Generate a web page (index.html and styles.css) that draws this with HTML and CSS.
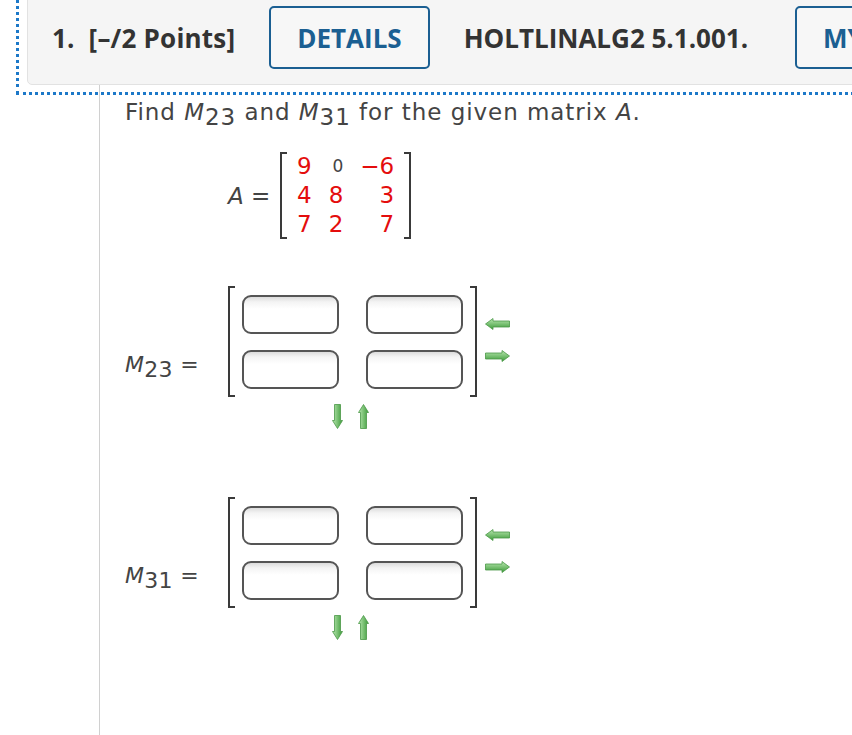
FILE: index.html
```html
<!DOCTYPE html>
<html>
<head>
<meta charset="utf-8">
<link rel="stylesheet" href="styles.css">
</head>
<body>
<div class="question">
  <div class="qwrap">
    <div class="qhead">
      <span class="qnum">1.&nbsp; [–/2 Points]</span>
      <button class="btn btn-details">DETAILS</button>
      <span class="qid">HOLTLINALG2 5.1.001.</span>
      <button class="btn btn-notes">MY NOTES</button>
    </div>
  </div>
  <div class="qbody">
    <p class="prompt">Find <i>M</i><sub>23</sub> and <i>M</i><sub>31</sub> for the given matrix <i>A</i>.</p>

    <div class="given">
      <span class="glabel"><i>A</i> =</span>
      <div class="mat">
        <span class="br br-l"></span>
        <div class="nums">
          <span class="red">9</span><span class="zero">0</span><span class="red">−6</span>
          <span class="red">4</span><span class="red">8</span><span class="red">3</span>
          <span class="red">7</span><span class="red">2</span><span class="red">7</span>
        </div>
        <span class="br br-r"></span>
      </div>
    </div>

    <div class="answer">
      <div class="alabel"><i>M</i><sub>23</sub> =</div>
      <div class="acol">
        <div class="arow">
          <div class="mat">
            <span class="br br-l"></span>
            <div class="cells">
              <input class="cell" type="text">
              <input class="cell" type="text">
              <input class="cell" type="text">
              <input class="cell" type="text">
            </div>
            <span class="br br-r"></span>
          </div>
          <div class="lr">
            <svg class="harrow" width="25" height="12" viewBox="0 0 25 12"><defs><linearGradient id="gh1" x1="0" y1="0" x2="0" y2="1"><stop offset="0" stop-color="#b9e8b0"/><stop offset="1" stop-color="#3c9a39"/></linearGradient></defs><path d="M0.5 6 L8 0.5 V3 H24.5 V9 H8 V11.5 Z" fill="url(#gh1)" stroke="#4a9846" stroke-width="0.8"/></svg>
            <svg class="harrow" width="25" height="12" viewBox="0 0 25 12"><defs><linearGradient id="gh2" x1="0" y1="0" x2="0" y2="1"><stop offset="0" stop-color="#b9e8b0"/><stop offset="1" stop-color="#3c9a39"/></linearGradient></defs><path d="M24.5 6 L17 0.5 V3 H0.5 V9 H17 V11.5 Z" fill="url(#gh2)" stroke="#4a9846" stroke-width="0.8"/></svg>
          </div>
        </div>
        <div class="ud">
          <svg width="11" height="25" viewBox="0 0 11 25"><defs><linearGradient id="gv1" x1="0" y1="0" x2="1" y2="0"><stop offset="0" stop-color="#b9e8b0"/><stop offset="1" stop-color="#3c9a39"/></linearGradient></defs><path d="M2.5 0.5 H8.5 V16.5 H10.5 L5.5 24.5 L0.5 16.5 H2.5 Z" fill="url(#gv1)" stroke="#4a9846" stroke-width="0.8"/></svg>
          <svg width="11" height="25" viewBox="0 0 11 25"><defs><linearGradient id="gv2" x1="0" y1="0" x2="1" y2="0"><stop offset="0" stop-color="#b9e8b0"/><stop offset="1" stop-color="#3c9a39"/></linearGradient></defs><path d="M2.5 24.5 H8.5 V8.5 H10.5 L5.5 0.5 L0.5 8.5 H2.5 Z" fill="url(#gv2)" stroke="#4a9846" stroke-width="0.8"/></svg>
        </div>
      </div>
    </div>

    <div class="answer answer-2">
      <div class="alabel"><i>M</i><sub>31</sub> =</div>
      <div class="acol">
        <div class="arow">
          <div class="mat">
            <span class="br br-l"></span>
            <div class="cells">
              <input class="cell" type="text">
              <input class="cell" type="text">
              <input class="cell" type="text">
              <input class="cell" type="text">
            </div>
            <span class="br br-r"></span>
          </div>
          <div class="lr">
            <svg class="harrow" width="25" height="12" viewBox="0 0 25 12"><defs><linearGradient id="gh3" x1="0" y1="0" x2="0" y2="1"><stop offset="0" stop-color="#b9e8b0"/><stop offset="1" stop-color="#3c9a39"/></linearGradient></defs><path d="M0.5 6 L8 0.5 V3 H24.5 V9 H8 V11.5 Z" fill="url(#gh3)" stroke="#4a9846" stroke-width="0.8"/></svg>
            <svg class="harrow" width="25" height="12" viewBox="0 0 25 12"><defs><linearGradient id="gh4" x1="0" y1="0" x2="0" y2="1"><stop offset="0" stop-color="#b9e8b0"/><stop offset="1" stop-color="#3c9a39"/></linearGradient></defs><path d="M24.5 6 L17 0.5 V3 H0.5 V9 H17 V11.5 Z" fill="url(#gh4)" stroke="#4a9846" stroke-width="0.8"/></svg>
          </div>
        </div>
        <div class="ud">
          <svg width="11" height="25" viewBox="0 0 11 25"><defs><linearGradient id="gv3" x1="0" y1="0" x2="1" y2="0"><stop offset="0" stop-color="#b9e8b0"/><stop offset="1" stop-color="#3c9a39"/></linearGradient></defs><path d="M2.5 0.5 H8.5 V16.5 H10.5 L5.5 24.5 L0.5 16.5 H2.5 Z" fill="url(#gv3)" stroke="#4a9846" stroke-width="0.8"/></svg>
          <svg width="11" height="25" viewBox="0 0 11 25"><defs><linearGradient id="gv4" x1="0" y1="0" x2="1" y2="0"><stop offset="0" stop-color="#b9e8b0"/><stop offset="1" stop-color="#3c9a39"/></linearGradient></defs><path d="M2.5 24.5 H8.5 V8.5 H10.5 L5.5 0.5 L0.5 8.5 H2.5 Z" fill="url(#gv4)" stroke="#4a9846" stroke-width="0.8"/></svg>
        </div>
      </div>
    </div>
  </div>
</div>
</body>
</html>
```

FILE: styles.css
```css
html, body {
  margin: 0;
  padding: 0;
  overflow: hidden;
  background: #ffffff;
}

body {
  width: 852px;
  height: 735px;
  font-family: "DejaVu Sans", Verdana, sans-serif;
  color: #444444;
}

.question {
  width: 1200px;
}

.qwrap {
  margin: -10px 0 0 19px;
  padding: 0 0 7px 8px;
  outline: 3px dotted #1c78c8;
}

.qhead {
  display: flex;
  align-items: center;
  background: #f5f5f5;
  border: 1px solid #e2e2e2;
  border-radius: 0 0 0 5px;
  padding: 15px 0 15px 24px;
  font-family: "Open Sans", sans-serif;
  font-weight: 700;
  font-size: 26px;
  color: #333333;
  white-space: nowrap;
}

.qnum {
  letter-spacing: 0.2px;
}

.btn {
  box-sizing: border-box;
  height: 63px;
  padding: 0 26px;
  border: 2px solid #1b5f92;
  border-radius: 5px;
  background: #f7f7f7;
  color: #1b5f92;
  font-family: "Open Sans", sans-serif;
  font-weight: 700;
  font-size: 26px;
}

.btn-details {
  margin-left: 34px;
}

.qid {
  margin-left: 34px;
}

.btn-notes {
  margin-left: 47px;
}

.qbody {
  margin: -7px 0 0 99px;
  border-left: 1px solid #d0d0d0;
  padding: 14px 0 0 25px;
  min-height: 700px;
}

.prompt {
  margin: 0;
  font-size: 23px;
  line-height: 26px;
  letter-spacing: 0.95px;
}

sub {
  font-size: 100%;
  vertical-align: -5px;
  line-height: 0;
}

i {
  font-style: italic;
}

.given {
  display: flex;
  align-items: center;
  margin: 27px 0 0 103px;
  font-size: 23px;
}

.glabel {
  width: 52px;
}

.mat {
  display: flex;
}

.br {
  width: 5px;
  border: 2px solid #3a3a3a;
}

.br-l {
  border-right: none;
}

.br-r {
  border-left: none;
}

.nums {
  display: grid;
  grid-template-columns: auto auto auto;
  grid-auto-rows: 29px;
  column-gap: 17px;
  justify-items: end;
  align-items: center;
  padding: 0 10px;
  line-height: 29px;
}

.red {
  color: #e40d0d;
}

.zero {
  font-size: 17px;
  color: #444444;
}

.answer {
  display: flex;
  margin-top: 47px;
  font-size: 22px;
}

.answer-2 {
  margin-top: 68px;
}

.alabel {
  width: 103px;
  padding-top: 66px;
  line-height: 26px;
  letter-spacing: 0.3px;
}

.arow {
  display: flex;
  align-items: center;
}

.cells {
  display: grid;
  grid-template-columns: 97px 97px;
  grid-auto-rows: 39px;
  column-gap: 27px;
  row-gap: 16px;
  padding: 9px 7px 8px 7px;
}

.cell {
  box-sizing: border-box;
  width: 97px;
  height: 39px;
  margin: 0;
  border: 2px solid #555555;
  border-radius: 9px;
  background: linear-gradient(#dcdcdc 0, #f4f4f4 5px, #ffffff 12px, #ffffff 100%);
}

.lr {
  display: flex;
  flex-direction: column;
  gap: 20px;
  margin: 0 0 4px 8px;
}

.harrow {
  display: block;
}

.ud {
  display: flex;
  gap: 15px;
  margin-top: 7px;
  padding-left: 104px;
}

.ud svg {
  display: block;
}
```
